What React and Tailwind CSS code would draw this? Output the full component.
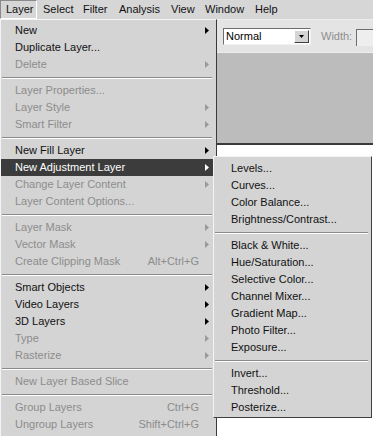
import React from "react";

const FONT = "font-['Liberation_Sans',Arial,sans-serif]";

function Arrow({ color }) {
  return (
    <svg width="4" height="7" viewBox="0 0 4 7" className="block">
      <path d="M0 0L4 3.5L0 7Z" fill={color} />
    </svg>
  );
}

const mainItems = [
  { t: "New", arrow: true },
  { t: "Duplicate Layer..." },
  { t: "Delete", dis: true, arrow: true },
  "sep",
  { t: "Layer Properties...", dis: true },
  { t: "Layer Style", dis: true, arrow: true },
  { t: "Smart Filter", dis: true, arrow: true },
  "sep",
  { t: "New Fill Layer", arrow: true },
  { t: "New Adjustment Layer", arrow: true, hi: true },
  { t: "Change Layer Content", dis: true, arrow: true },
  { t: "Layer Content Options...", dis: true },
  "sep",
  { t: "Layer Mask", dis: true, arrow: true },
  { t: "Vector Mask", dis: true, arrow: true },
  { t: "Create Clipping Mask", dis: true, sc: "Alt+Ctrl+G" },
  "sep",
  { t: "Smart Objects", arrow: true },
  { t: "Video Layers", arrow: true },
  { t: "3D Layers", arrow: true },
  { t: "Type", dis: true, arrow: true },
  { t: "Rasterize", dis: true, arrow: true },
  "sep",
  { t: "New Layer Based Slice", dis: true },
  "sep",
  { t: "Group Layers", dis: true, sc: "Ctrl+G" },
  { t: "Ungroup Layers", dis: true, sc: "Shift+Ctrl+G" },
];

const subItems = [
  "Levels...",
  "Curves...",
  "Color Balance...",
  "Brightness/Contrast...",
  "sep",
  "Black & White...",
  "Hue/Saturation...",
  "Selective Color...",
  "Channel Mixer...",
  "Gradient Map...",
  "Photo Filter...",
  "Exposure...",
  "sep",
  "Invert...",
  "Threshold...",
  "Posterize...",
];

function Sep() {
  return (
    <div className="h-[9px] flex flex-col justify-center px-[1px]">
      <div className="h-px bg-[#8a8a8a]" />
      <div className="h-px bg-white" />
    </div>
  );
}

function MainRow({ item }) {
  const color = item.hi ? "text-white" : item.dis ? "text-[#8c8c8c]" : "text-[#111111]";
  const arrowColor = item.hi ? "#ffffff" : item.dis ? "#9a9a9a" : "#000000";
  return (
    <div
      className={`h-[17px] flex items-center pl-[14px] ${color} ${
        item.hi ? "bg-[#3c3c3c]" : ""
      }`}
    >
      <span className="whitespace-nowrap">{item.t}</span>
      <span className="ml-auto whitespace-nowrap">{item.sc || ""}</span>
      <span className="w-[14px] shrink-0 pl-[6px] flex items-center">
        {item.arrow ? <Arrow color={arrowColor} /> : null}
      </span>
    </div>
  );
}

function MenuBarItem({ label, w, active, first }) {
  return (
    <div
      className={`h-[19px] shrink-0 flex items-center ${first ? "pl-[5px]" : "pl-[6px]"} ${w} ${
        active
          ? "border-t border-l border-[#8a8a8a] border-r border-r-white border-b border-b-white pl-[4px]"
          : ""
      }`}
    >
      <span className="whitespace-nowrap leading-none">{label}</span>
    </div>
  );
}

export default function App() {
  return (
    <div
      className={`${FONT} text-[11px] w-[373px] h-[436px] relative overflow-hidden bg-white text-[#111111]`}
    >
      {/* Menu bar */}
      <div className="h-[19px] bg-[#d6d6d6] flex">
        <MenuBarItem label="Layer" w="w-[37px]" active first />
        <MenuBarItem label="Select" w="w-[40px]" />
        <MenuBarItem label="Filter" w="w-[36px]" />
        <MenuBarItem label="Analysis" w="w-[52px]" />
        <MenuBarItem label="View" w="w-[34px]" />
        <MenuBarItem label="Window" w="w-[50px]" />
        <MenuBarItem label="Help" w="w-[40px]" />
      </div>

      {/* Workspace */}
      <div className="flex flex-col">
        {/* options bar */}
        <div className="h-[34px] bg-[#e4e4e4] border-t border-[#f4f4f4] flex items-start pt-[8px] pl-[223px] border-b border-dotted border-b-[#f8f8f8] overflow-hidden">
          <div className="w-[88px] shrink-0 h-[17px] bg-white border-t border-l border-[#6e6e6e] border-r border-r-[#f2f2f2] border-b border-b-[#f2f2f2] flex items-center">
            <span className="pl-[2px] leading-none text-black">Normal</span>
            <div className="ml-auto mr-[1px] w-[15px] h-[13px] bg-[#d4d4d4] border-t border-l border-t-white border-l-white border-r border-b border-r-[#404040] border-b-[#404040] flex items-center justify-center">
              <svg width="5" height="3" viewBox="0 0 5 3" className="block">
                <path d="M0 0H5L2.5 3Z" fill="#000" />
              </svg>
            </div>
          </div>
          <span className="shrink-0 ml-[10px] mt-[3px] leading-none text-[#8e8e8e]">Width:</span>
          <div className="shrink-0 ml-[4px] mt-[1px] w-[40px] h-[17px] bg-[#eeeeee] border-t border-l border-[#6e6e6e]" />
        </div>
        {/* gray canvas */}
        <div className="h-[90px] bg-[#bcbcbc]" />
        {/* white area */}
        <div className="h-[300px] bg-white border-t-2 border-[#3a3a3a]" />
      </div>

      {/* Main dropdown menu */}
      <div className="absolute left-0 top-[19px] w-[217px] h-[430px] bg-[#d4d4d4] border-t border-l border-t-[#f4f4f4] border-l-[#f4f4f4] border-r border-r-[#3a3a3a] pr-[3px] pt-[2px]">
        {mainItems.map((it, i) =>
          it === "sep" ? <Sep key={i} /> : <MainRow key={i} item={it} />
        )}
      </div>

      {/* Submenu */}
      <div className="absolute left-[213px] top-[156px] w-[159px] h-[262px] bg-[#d4d4d4] border-t border-l border-[#f4f4f4] border-r border-b border-r-[#404040] border-b-[#404040] pt-[3px] pr-[2px]">
        {subItems.map((t, i) =>
          t === "sep" ? (
            <Sep key={i} />
          ) : (
            <div key={i} className="h-[17px] flex items-center pl-[17px] text-[#111111]">
              <span className="whitespace-nowrap">{t}</span>
            </div>
          )
        )}
      </div>
    </div>
  );
}
